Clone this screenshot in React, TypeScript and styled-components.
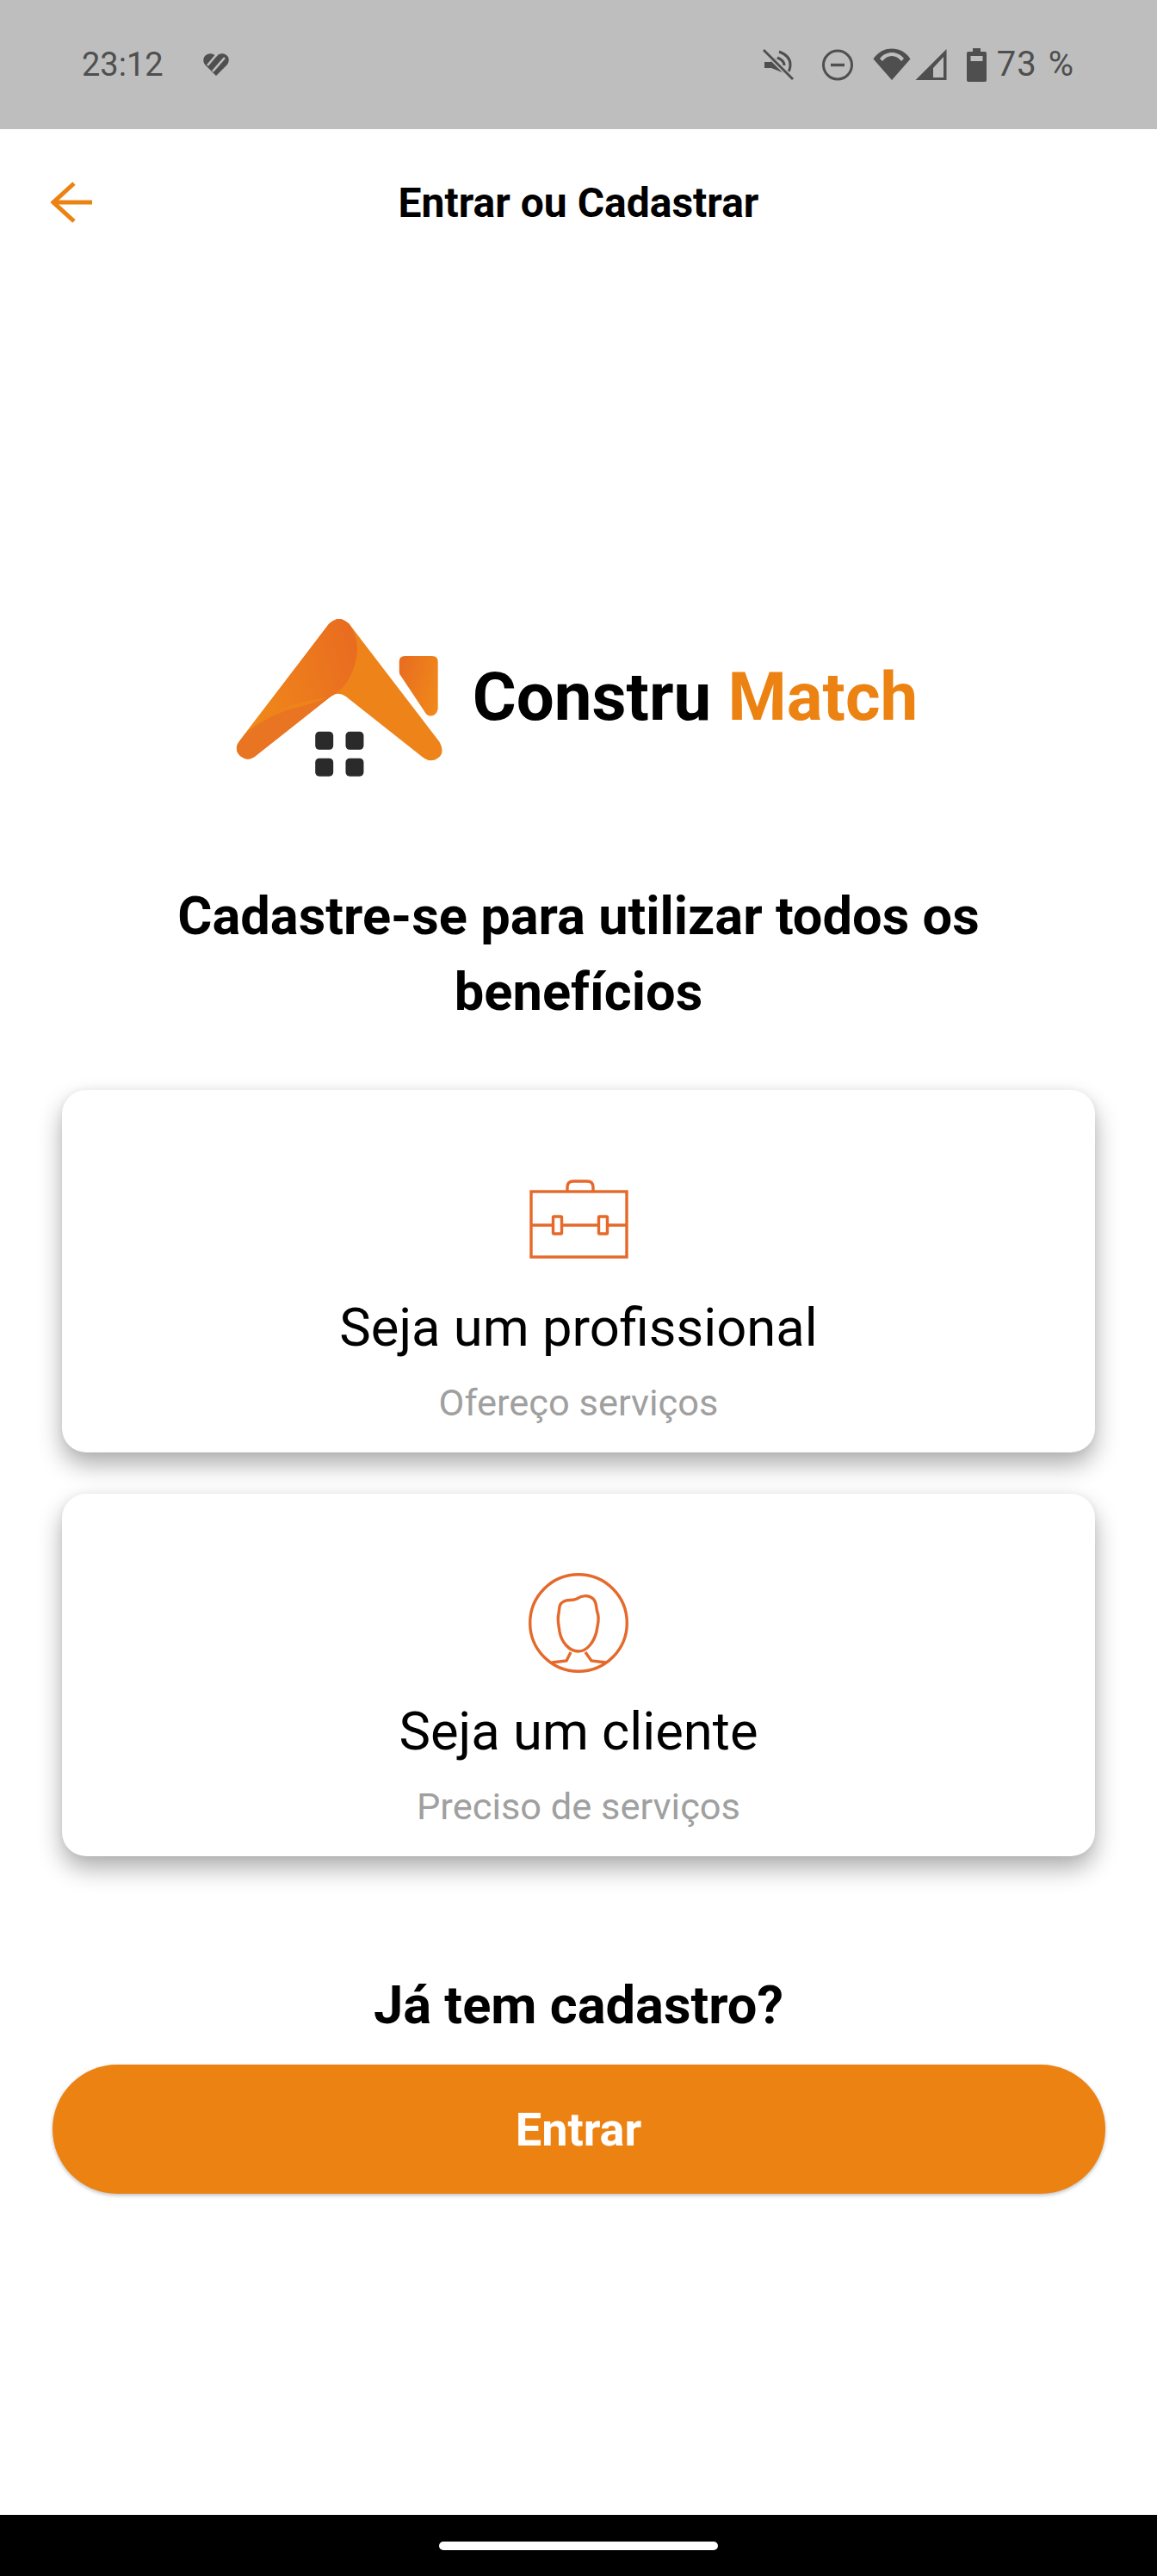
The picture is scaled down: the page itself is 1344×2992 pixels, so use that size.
import { FC } from 'react'
import styled, { createGlobalStyle } from 'styled-components'

const ORANGE = '#ec8212'
const LINE = '#e5692a'
const STATUS = '#4f4f4f'
const STATUS_BG = '#bebebe'

const GlobalStyle = createGlobalStyle`
  html, body {
    margin: 0;
    padding: 0;
    background: #fff;
  }
  * {
    box-sizing: border-box;
  }
`

const HeartIcon: FC = () => (
  <svg width="30" height="26" viewBox="0 0 30 26">
    <path d="M15 26 L2 13 C-1 9 0 3 5 1 C9 -1 13 1 15 4 C18 0 23 -1 27 2 C31 5 30 10 28 13 Z" fill={STATUS} />
    <path d="M5 14 L16 1 M11 21 L25 5" stroke={STATUS_BG} strokeWidth="2.6" />
  </svg>
)

const MuteIcon: FC = () => (
  <svg width="36" height="36" viewBox="0 0 36 36" fill="none">
    <path d="M2 15 H9 L15 10 L25 28 L10 22 H2 Z" fill={STATUS} />
    <path d="M19 3 C27 6 32 11 32 18 C32 22 31 25 29 27" stroke={STATUS} strokeWidth="3" />
    <path d="M17 10 C22 12 25 15 25 19" stroke={STATUS} strokeWidth="3" />
    <path d="M1 1 L35 35" stroke={STATUS_BG} strokeWidth="6" />
    <path d="M1 1 L35 35" stroke={STATUS} strokeWidth="2.8" />
  </svg>
)

const DndIcon: FC = () => (
  <svg width="36" height="37" viewBox="0 0 36 37" fill="none">
    <circle cx="18" cy="18.5" r="16.5" stroke={STATUS} strokeWidth="3" />
    <path d="M10 18.5 H26" stroke={STATUS} strokeWidth="3.4" />
  </svg>
)

const WifiIcon: FC = () => (
  <svg width="44" height="38" viewBox="0 0 44 38">
    <path d="M22 37 L0.5 12.5 C6 4 14 0.5 22 0.5 C30 0.5 38 4 43.5 12.5 Z" fill={STATUS} />
    <path d="M8 12 C12 7 17 5 22 5 C27 5 32 7 36 12 L33 15 C30 11 26 9 22 9 C18 9 14 11 11 15 Z" fill={STATUS_BG} />
  </svg>
)

const SignalIcon: FC = () => (
  <svg width="37" height="38" viewBox="0 0 37 38">
    <path d="M36.5 1 V37 H0.5 Z" fill={STATUS} />
    <path d="M33 10 V34 H21 V23 Z" fill={STATUS_BG} />
  </svg>
)

const BatteryIcon: FC = () => (
  <svg width="23" height="39" viewBox="0 0 23 39">
    <path d="M7 0 H16 V4 H21 Q23 4 23 6 V37 Q23 39 21 39 H2 Q0 39 0 37 V6 Q0 4 2 4 H7 Z" fill={STATUS} />
    <rect x="4.5" y="9" width="14" height="6" fill={STATUS_BG} />
  </svg>
)

const BackIcon: FC = () => (
  <svg width="48" height="48" viewBox="0 0 48 48" fill="none">
    <path d="M3 24 H48" stroke={ORANGE} strokeWidth="5" />
    <path d="M27 2 L3 24 L27 46" stroke={ORANGE} strokeWidth="5" />
  </svg>
)

const LogoMark: FC = () => (
  <svg width="253" height="197" viewBox="60 70 760 590">
    <defs>
      <linearGradient id="wing" x1="0" y1="0.6" x2="1" y2="0.3">
        <stop offset="0" stopColor="#f0881a" />
        <stop offset="1" stopColor="#e96c20" />
      </linearGradient>
      <linearGradient id="chimney" x1="0" y1="0.3" x2="1" y2="0.7">
        <stop offset="0" stopColor="#e96e20" />
        <stop offset="1" stopColor="#f0881a" />
      </linearGradient>
    </defs>
    <path
      d="M400 104 Q435 70 470 104 L785 515 Q810 560 770 578 Q745 586 725 568 L460 358 Q430 338 405 358 L140 568 Q115 585 90 565 Q65 540 90 510 Z"
      fill="#ee8419"
    />
    <path
      d="M400 104 Q435 70 470 104 Q505 150 497 215 Q480 310 420 350 L405 358 L300 380 Q200 400 105 490 Z"
      fill="url(#wing)"
    />
    <path
      d="M105 490 Q190 420 290 395 Q370 375 415 350 L405 358 L140 568 Q115 585 90 565 Q65 540 90 510 Z"
      fill="#e97422"
    />
    <path
      d="M665 216 H760 Q780 216 780 236 V400 Q775 425 755 425 Q742 425 735 412 L650 285 Q645 280 645 270 V236 Q645 216 665 216 Z"
      fill="url(#chimney)"
    />
    <rect x="352" y="480" width="63" height="63" rx="14" fill="#2a2a2a" />
    <rect x="458" y="480" width="63" height="63" rx="14" fill="#2a2a2a" />
    <rect x="352" y="573" width="63" height="63" rx="14" fill="#2a2a2a" />
    <rect x="458" y="573" width="63" height="63" rx="14" fill="#2a2a2a" />
  </svg>
)

const BriefcaseIcon: FC = () => (
  <svg width="115" height="92" viewBox="0 0 115 92" fill="none" stroke={LINE} strokeWidth="3.4">
    <rect x="2" y="14" width="111" height="76" />
    <path d="M44 13 V9 Q44 2 51 2 H67 Q74 2 74 9 V13" />
    <path d="M2 53 H27 M38 53 H80 M91 53 H113" />
    <rect x="27.5" y="43" width="10" height="20" rx="1" />
    <rect x="80.5" y="43" width="10" height="20" rx="1" />
  </svg>
)

const PersonIcon: FC = () => (
  <svg width="116" height="116" viewBox="0 0 116 116" fill="none" stroke={LINE} strokeWidth="3.4">
    <circle cx="58" cy="58" r="56.3" />
    <path d="M41 33 C46 30 50 33 56 30 C62 26 70 25 75 30 C80 35 78 41 80 46 C83 53 80 60 79 68 C76 80 68 91 58 91 C47 91 38 80 36 68 C35 60 33 54 35 47 C36 40 35 36 41 33 Z" />
    <path d="M49 92 L44 102 L27 104 M66 92 L73 102 L90 104" />
  </svg>
)

const App: FC = () => (
  <Page>
    <GlobalStyle />
    <StatusBar>
      <StatusLeft>
        <Clock>23:12</Clock>
        <HeartIcon />
      </StatusLeft>
      <StatusRight>
        <SoundIcons>
          <MuteIcon />
          <DndIcon />
        </SoundIcons>
        <NetworkIcons>
          <WifiIcon />
          <SignalIcon />
        </NetworkIcons>
        <BatteryGroup>
          <BatteryIcon />
          <BatteryLevel>73 %</BatteryLevel>
        </BatteryGroup>
      </StatusRight>
    </StatusBar>

    <Header>
      <BackButton>
        <BackIcon />
      </BackButton>
      <HeaderTitle>Entrar ou Cadastrar</HeaderTitle>
    </Header>

    <Content>
      <Logo>
        <LogoMark />
        <LogoText>
          Constru <LogoAccent>Match</LogoAccent>
        </LogoText>
      </Logo>

      <Heading>Cadastre-se para utilizar todos os benefícios</Heading>

      <Cards>
        <Card>
          <CardIcon>
            <BriefcaseIcon />
          </CardIcon>
          <CardTitle>Seja um profissional</CardTitle>
          <CardSubtitle>Ofereço serviços</CardSubtitle>
        </Card>
        <Card>
          <CardIcon>
            <PersonIcon />
          </CardIcon>
          <CardTitle>Seja um cliente</CardTitle>
          <CardSubtitle>Preciso de serviços</CardSubtitle>
        </Card>
      </Cards>

      <LoginTitle>Já tem cadastro?</LoginTitle>
      <LoginButton>Entrar</LoginButton>
    </Content>

    <NavBar>
      <HomePill />
    </NavBar>
  </Page>
)

const Page = styled.div`
  display: flex;
  flex-direction: column;
  width: 1344px;
  height: 2992px;
  overflow: hidden;
  background: #fff;
  font-family: Roboto, 'Liberation Sans', sans-serif;
`

const StatusBar = styled.div`
  display: flex;
  align-items: center;
  justify-content: space-between;
  flex-shrink: 0;
  height: 150px;
  padding: 0 96px 0 95px;
  background: ${STATUS_BG};
  color: ${STATUS};
`

const StatusLeft = styled.div`
  display: flex;
  align-items: center;
  gap: 46px;
`

const Clock = styled.span`
  font-size: 38px;
  line-height: 44px;
`

const StatusRight = styled.div`
  display: flex;
  align-items: center;
  gap: 23px;
`

const SoundIcons = styled.div`
  display: flex;
  align-items: center;
  gap: 33px;
`

const NetworkIcons = styled.div`
  display: flex;
  align-items: center;
  gap: 5px;
`

const BatteryGroup = styled.div`
  display: flex;
  align-items: center;
  gap: 12px;
`

const BatteryLevel = styled.span`
  font-size: 40px;
  line-height: 44px;
  letter-spacing: 1px;
  word-spacing: 2px;
`

const Header = styled.header`
  display: flex;
  align-items: center;
  justify-content: center;
  position: relative;
  flex-shrink: 0;
  height: 172px;
`

const BackButton = styled.div`
  position: absolute;
  left: 59px;
  top: 61px;
  line-height: 0;
`

const HeaderTitle = styled.h1`
  margin: 0;
  font-size: 48px;
  font-weight: 700;
  line-height: 56px;
  color: #000;
`

const Content = styled.main`
  display: flex;
  flex-direction: column;
  flex: 1;
  align-items: center;
`

const Logo = styled.div`
  display: flex;
  align-items: center;
  gap: 27px;
  margin: 391px 9px 0 0;
`

const LogoText = styled.div`
  padding-bottom: 3px;
  font-size: 78px;
  font-weight: 700;
  line-height: 90px;
  color: #000;
`

const LogoAccent = styled.span`
  color: ${ORANGE};
`

const Heading = styled.h2`
  width: 1000px;
  margin: 110px 0 0;
  font-size: 61.4px;
  font-weight: 700;
  line-height: 88px;
  text-align: center;
  color: #000;
`

const Cards = styled.div`
  display: flex;
  flex-direction: column;
  gap: 48px;
  width: 1200px;
  margin-top: 70px;
`

const Card = styled.div`
  display: flex;
  flex-direction: column;
  align-items: center;
  height: 421px;
  padding-top: 92px;
  border-radius: 28px;
  background: #fff;
  box-shadow: 0 14px 28px rgba(0, 0, 0, 0.32), 0 0 10px rgba(0, 0, 0, 0.05);
`

const CardIcon = styled.div`
  display: flex;
  align-items: center;
  justify-content: center;
  height: 115px;
`

const CardTitle = styled.div`
  margin-top: 39px;
  font-size: 61.5px;
  line-height: 60px;
  color: #000;
`

const CardSubtitle = styled.div`
  margin-top: 33px;
  font-size: 43.4px;
  line-height: 50px;
  color: #a0a0a0;
`

const LoginTitle = styled.div`
  margin-top: 143px;
  font-size: 61.4px;
  font-weight: 700;
  line-height: 60px;
  color: #000;
`

const LoginButton = styled.button`
  width: 1223px;
  height: 150px;
  margin-top: 39px;
  border: none;
  border-radius: 75px;
  background: ${ORANGE};
  box-shadow: 0 2px 4px rgba(0, 0, 0, 0.25);
  font-family: inherit;
  font-size: 54px;
  font-weight: 700;
  color: #fff;
`

const NavBar = styled.div`
  display: flex;
  align-items: center;
  justify-content: center;
  flex-shrink: 0;
  height: 71px;
  background: #000;
`

const HomePill = styled.div`
  width: 324px;
  height: 10px;
  border-radius: 5px;
  background: #fff;
`

export default App
